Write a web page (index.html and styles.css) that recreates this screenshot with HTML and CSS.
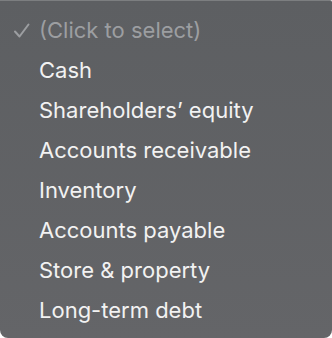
FILE: index.html
```html
<!DOCTYPE html>
<html lang="en">
<head>
  <meta charset="UTF-8">
  <title>Select menu</title>
  <link rel="stylesheet" href="styles.css">
</head>
<body>
  <ul class="menu">
    <li class="item placeholder">
      <svg class="check" width="18" height="16" viewBox="0 0 18 16"><path d="M2 8.5 L6.5 13.5 L15.5 1.5" fill="none" stroke="currentColor" stroke-width="2" stroke-linecap="round" stroke-linejoin="round"/></svg>(Click to select)
    </li>
    <li class="item">Cash</li>
    <li class="item">Shareholders&rsquo; equity</li>
    <li class="item">Accounts receivable</li>
    <li class="item">Inventory</li>
    <li class="item">Accounts payable</li>
    <li class="item">Store &amp; property</li>
    <li class="item">Long-term debt</li>
  </ul>
</body>
</html>
```

FILE: styles.css
```css
html, body {
  margin: 0;
  padding: 0;
  background: #ffffff;
}

/* menu */
.menu {
  list-style: none;
  margin: 0;
  padding: 9px 0 0 0;
  width: 332px;
  height: 338px;
  box-sizing: border-box;
  background: linear-gradient(#5d5f62, #646568);
  border-top: 1px solid #7c7e80;
  border-radius: 0 2px 8px 8px;
  font-family: Inter, "Noto Sans", sans-serif;
  font-size: 22px;
  color: #f2f2f2;
}

.item {
  position: relative;
  height: 40px;
  line-height: 40px;
  padding-left: 39px;
  white-space: nowrap;
}

.placeholder {
  color: #9c9ea1;
}

.check {
  position: absolute;
  left: 13px;
  top: 13px;
}
```
